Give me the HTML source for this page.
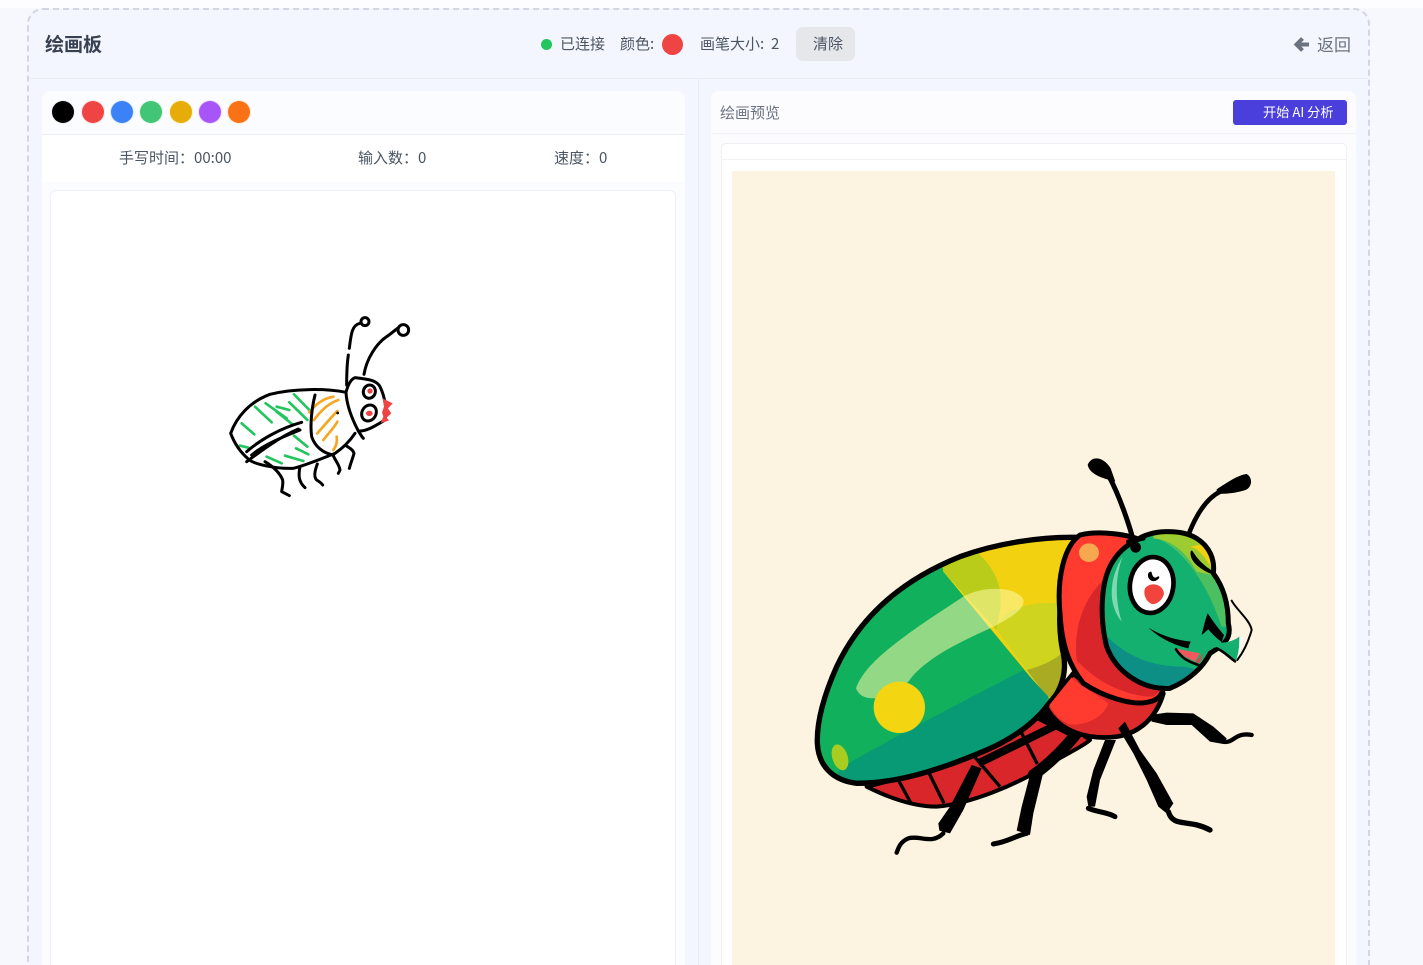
<!DOCTYPE html>
<html lang="zh">
<head>
<meta charset="utf-8">
<title>绘画板</title>
<style>
*{box-sizing:border-box}
html,body{margin:0;padding:0;width:1423px;height:965px;overflow:hidden}
#root{position:relative;width:1423px;height:965px;overflow:hidden;background:#f7f8fe;font-family:"Noto Sans CJK SC","Liberation Sans",sans-serif;color:#4b5563}
.a{position:absolute}
.t{position:absolute;white-space:nowrap;line-height:20px;font-size:15px;color:#4b5563}
.sw{position:absolute;width:22px;height:22px;border-radius:50%;top:101px}
svg{position:absolute;left:0;top:0}
</style>
</head>
<body>
<div id="root">
<div class="a" style="left:0;top:0;width:1423px;height:8px;background:#fdfdff"></div>
<div class="a" style="left:27px;top:8px;width:1343px;height:1000px;border:2px dashed #d3d6e2;border-radius:16px;background:#f3f6fe"></div>
<div class="a" style="left:29px;top:78px;width:1339px;height:1px;background:#e9ecf5"></div>
<div class="a" style="left:698px;top:79px;width:1px;height:886px;background:#e9ecf5"></div>

<div class="t" style="left:45px;top:34px;font-size:19px;font-weight:700;color:#374151">绘画板</div>
<div class="a" style="left:541px;top:39px;width:11px;height:11px;border-radius:50%;background:#22c55e"></div>
<div class="t" style="left:560px;top:34px">已连接</div>
<div class="t" style="left:620px;top:34px">颜色:</div>
<div class="a" style="left:662px;top:34px;width:21px;height:21px;border-radius:50%;background:#ef4444"></div>
<div class="t" style="left:700px;top:34px">画笔大小:</div>
<div class="t" style="left:771px;top:34px">2</div>
<div class="a" style="left:796px;top:27px;width:59px;height:34px;border-radius:7px;background:#e5e7eb"></div>
<div class="t" style="left:813px;top:34px;font-size:15px">清除</div>
<svg width="1423" height="965" style="pointer-events:none"><path d="M1309 44.500H1298M1302.500 38.500L1296.500 44.500L1302.500 50.500" fill="none" stroke="#6b7280" stroke-width="4"/></svg>
<div class="t" style="left:1317px;top:34px;font-size:17px;color:#6b7280">返回</div>

<!-- left panel -->
<div class="a" style="left:42px;top:91px;width:643px;height:900px;border-radius:8px;background:#fbfcff"></div>
<div class="a" style="left:42px;top:134px;width:643px;height:1px;background:#eceef2"></div>
<div class="a" style="left:42px;top:135px;width:643px;height:47px;background:#fff"></div>
<div class="sw" style="left:52px;background:#000;box-shadow:0 0 0 1px #f1f1f4"></div>
<div class="sw" style="left:81.500px;background:#ef4444;box-shadow:0 0 0 1px #fde3e3"></div>
<div class="sw" style="left:111px;background:#3b82f6;box-shadow:0 0 0 1px #dfeafd"></div>
<div class="sw" style="left:140px;background:#42c574;box-shadow:0 0 0 1px #e0f6e8"></div>
<div class="sw" style="left:169.500px;background:#e6ac0a;box-shadow:0 0 0 1px #faefce"></div>
<div class="sw" style="left:198.500px;background:#a855f7;box-shadow:0 0 0 1px #efe2fd"></div>
<div class="sw" style="left:228px;background:#f97316;box-shadow:0 0 0 1px #fde8d8"></div>
<div class="t" style="left:119px;top:148px">手写时间：00:00</div>
<div class="t" style="left:358px;top:148px">输入数：0</div>
<div class="t" style="left:554px;top:148px">速度：0</div>
<div class="a" style="left:50px;top:190px;width:626px;height:800px;background:#fff;border:1px solid #eef0f4;border-radius:6px"></div>

<!-- right panel -->
<div class="a" style="left:711px;top:91px;width:645px;height:900px;border-radius:8px;background:#fcfcff"></div>
<div class="a" style="left:711px;top:133px;width:645px;height:1px;background:#f1f2f7"></div>
<div class="t" style="left:720px;top:103px;color:#6b7280">绘画预览</div>
<div class="a" style="left:1233px;top:100px;width:114px;height:25px;border-radius:3px;background:#4a3fdc"></div>
<div class="t" style="left:1263px;top:102px;font-size:13.200px;color:#fff">开始 AI 分析</div>
<div class="a" style="left:721px;top:143px;width:626px;height:860px;background:#fff;border:1px solid #eef0f4;border-radius:5px"></div>
<div class="a" style="left:722px;top:159px;width:624px;height:1px;background:#f1f2f5"></div>
<div class="a" style="left:732px;top:171px;width:603px;height:794px;background:#fcf3e1"></div>

<svg width="1423" height="965" viewBox="0 0 1423 965" style="filter:blur(.35px)">
<defs>
<clipPath id="shell"><path d="M830 292C720 290 590 310 480 350C330 410 190 510 110 680C70 770 50 850 52 910C55 970 90 1020 170 1030C290 1030 420 990 560 930C640 895 700 850 740 800C790 750 800 690 790 640C770 560 775 400 830 292Z"/></clipPath>
<clipPath id="head"><path d="M290 300C330 270 420 265 470 295C510 320 525 360 520 400C550 440 565 490 565 550C575 590 560 610 510 640C490 680 450 720 390 745C310 750 230 700 200 620C180 540 180 430 215 370C235 335 260 315 290 300Z"/></clipPath>
</defs>

<!-- hand sketch -->
<g transform="translate(220 305) scale(.33333)" fill="none" stroke-linecap="round" stroke-linejoin="round">
<g stroke="#22c55e" stroke-width="8">
<path d="M65 355L103 388M105 305L155 352M137 295L200 340M170 305L208 315M170 320L220 360M208 292L262 345M222 268L268 315M222 392L262 425M228 430L265 448M195 452L250 468M140 455L185 475M60 422L85 428"/>
</g>
<g stroke="#f5a623" stroke-width="8">
<path d="M268 322C285 300 310 280 340 275M282 345C300 320 325 295 355 285M292 385C310 365 335 335 352 318M310 405C325 385 345 365 352 350M340 435C350 420 352 410 350 395"/>
</g>
<g stroke="#000" stroke-width="9">
<path d="M378 262C320 250 220 250 150 268C90 290 50 335 32 385C45 420 65 445 85 462C100 478 170 492 220 490C260 480 320 455 345 445C375 425 395 400 405 385"/>
<path d="M285 270C275 310 270 360 275 395C285 425 310 445 340 450"/>
<path d="M378 262C385 235 395 222 405 218C440 222 470 225 480 245C495 275 502 320 495 345C470 360 440 380 415 378C395 340 380 300 378 262Z"/>
<path d="M415 378C420 385 425 395 430 400"/>
<ellipse cx="448" cy="260" rx="18" ry="20" transform="rotate(15 448 260)"/>
<ellipse cx="447" cy="324" rx="21" ry="25" transform="rotate(30 447 324)"/>
<path d="M380 240C380 200 382 170 385 150M388 130C393 90 395 60 420 55"/>
<circle cx="435" cy="50" r="12"/>
<path d="M432 208C440 160 470 115 500 95C515 85 525 75 533 70"/>
<circle cx="550" cy="75" r="16"/>
<path d="M80 440C120 405 180 370 245 352M95 450C130 420 190 395 240 375M80 470C120 440 180 395 235 372"/>
<path d="M135 470C160 485 180 505 188 525C190 540 185 555 185 560C195 565 205 570 208 572"/>
<path d="M240 485C235 510 235 530 255 548M292 477C285 495 280 515 290 525C298 530 305 535 308 540M340 452C345 465 358 480 360 495C358 500 357 502 355 505M378 422C390 430 400 435 402 445C398 460 392 475 388 490"/>
</g>
<circle cx="353" cy="324" r="4" fill="#000"/>
<g fill="#ef4444"><circle cx="450" cy="258" r="8"/><ellipse cx="448" cy="325" rx="10" ry="8"/>
<path d="M488 280L518 295L504 310L514 325L500 338L507 347L482 354L490 335L486 322L492 305Z"/></g>
</g>

<!-- beetle back -->
<g transform="translate(800 440) scale(.33333)" stroke-linecap="round" stroke-linejoin="round">
<path d="M200 1040C280 1080 350 1100 410 1100C520 1090 650 1030 720 990C780 950 850 920 870 900L740 810C640 890 420 990 200 1040Z" fill="#d8262a" stroke="#000" stroke-width="12"/>
<g fill="none" stroke="#000" stroke-linecap="butt">
<path d="M295 1020L332 1088M385 995L432 1090M515 940L600 1040M660 870L712 972" stroke-width="10"/>
<path d="M535 970L780 850" stroke-width="24"/>
<path d="M720 825L830 880" stroke-width="36"/>
</g>
<path d="M515 975L545 985L490 1110L450 1180L418 1172L415 1150L450 1100Z" fill="#000"/>
<path d="M430 1180C395 1215 360 1185 325 1195C300 1205 295 1225 290 1238" fill="none" stroke="#000" stroke-width="13"/>
<path d="M830 880C790 930 750 970 700 1005" fill="none" stroke="#000" stroke-width="34"/>
<path d="M690 1005L728 1005L700 1120L690 1185L650 1172L665 1100Z" fill="#000"/>
<path d="M680 1180C640 1190 625 1205 580 1212" fill="none" stroke="#000" stroke-width="15"/>
<g clip-path="url(#shell)">
<rect x="0" y="250" width="900" height="850" fill="#10b05c"/>
<path d="M430 395L420 330L850 270V820L740 770Z" fill="#f2d210"/>
<path d="M430 395L420 330L535 340C590 390 610 450 600 510L590 570Z" fill="#b9cc1a"/>
<path d="M590 570C600 520 660 480 790 490L810 760L740 770Z" fill="#cfd41e"/>
<path d="M680 690C720 680 770 660 800 625L810 780L740 770Z" fill="#a9ac22"/>
<path d="M120 985C300 880 500 780 670 690L745 770L700 870L400 1040L100 1040Z" fill="#089a74"/>
<path d="M168 745C195 670 290 600 490 470C540 440 640 435 668 475C680 500 650 525 570 565C470 610 370 660 325 725C280 770 190 800 168 745Z" fill="#fffaa8" opacity=".55"/>
<circle cx="298" cy="802" r="77" fill="#f4d512"/>
<ellipse cx="120" cy="952" rx="23" ry="40" transform="rotate(-18 120 952)" fill="#a8cc20"/>
</g>
<path d="M830 292C720 290 590 310 480 350C330 410 190 510 110 680C70 770 50 850 52 910C55 970 90 1020 170 1030C290 1030 420 990 560 930C640 895 700 850 740 800C790 750 800 690 790 640C770 560 775 400 830 292Z" fill="none" stroke="#000" stroke-width="16"/>
</g>

<!-- beetle front -->
<g transform="translate(1040 440) scale(.33333)" stroke-linecap="round" stroke-linejoin="round">
<path d="M330 825L380 818L460 820L520 860L560 895L550 912L510 905L455 855L380 855L335 845Z" fill="#000"/>
<path d="M550 905C580 912 585 875 635 885" fill="none" stroke="#000" stroke-width="13"/>
<path d="M195 900L228 900L180 1020L165 1100L145 1100L140 1070L160 990Z" fill="#000"/>
<path d="M145 1105C175 1118 200 1115 225 1130" fill="none" stroke="#000" stroke-width="15"/>
<path d="M18 800L100 700C150 750 280 790 370 760C350 830 300 880 230 890C150 900 60 880 18 800Z" fill="#dd2a2a" stroke="#000" stroke-width="14"/>
<path d="M28 795L95 712C120 740 170 760 205 790C190 835 130 860 85 852C60 840 40 820 28 795Z" fill="#ff3b30"/>
<path d="M235 865L255 845L300 930L350 1000L400 1090L380 1120L355 1100L320 1020L280 940Z" fill="#000"/>
<path d="M385 1115C400 1165 445 1135 510 1170" fill="none" stroke="#000" stroke-width="16"/>
<path d="M120 285C70 320 50 420 60 520C65 620 90 680 130 730C190 770 280 800 330 785C355 780 370 760 370 740L300 300C270 285 180 270 120 285Z" fill="#ff3b30" stroke="#000" stroke-width="15"/>
<path d="M190 420C130 480 100 560 110 660C170 730 270 772 340 770L375 740L250 400Z" fill="#d8262a"/>
<ellipse cx="147" cy="338" rx="30" ry="28" fill="#f6a850"/>
<path d="M285 320C270 260 240 170 205 105" fill="none" stroke="#000" stroke-width="15"/>
<path d="M143 75C155 45 190 50 212 85L226 125C190 115 150 105 143 75Z" fill="#000"/>
<path d="M445 285C470 220 500 175 540 155" fill="none" stroke="#000" stroke-width="14"/>
<path d="M530 148C565 125 595 105 620 102C642 115 635 148 610 152C585 160 555 162 530 162Z" fill="#000"/>
<g clip-path="url(#head)">
<rect x="150" y="250" width="450" height="520" fill="#14b070"/>
<path d="M175 560C240 640 320 680 430 680L480 690L390 770L170 700Z" fill="#0e8f85"/>
<path d="M350 295C420 320 500 420 545 560L580 560L580 250H350Z" fill="#4cc060"/>
<path d="M340 295C400 300 440 340 470 395L540 410L520 260H340Z" fill="#9ccc30"/>
<path d="M450 320C480 325 510 370 525 410L560 300Z" fill="#f0d010"/>
<path d="M248 350C210 410 200 490 245 545C225 480 225 410 248 350Z" fill="#80d8b0"/>
</g>
<path d="M290 300C330 270 420 265 470 295C510 320 525 360 520 400C550 440 565 490 565 550C575 590 560 610 510 640C490 680 450 720 390 745C310 750 230 700 200 620C180 540 180 430 215 370C235 335 260 315 290 300Z" fill="none" stroke="#000" stroke-width="15"/>
<path d="M455 335C450 365 490 390 522 402L515 395C490 380 470 360 455 335Z" fill="#000" stroke="#000" stroke-width="6"/>
<circle cx="287" cy="322" r="16" fill="#000"/>
<path d="M265 305L310 295" stroke="#000" stroke-width="14"/>
<ellipse cx="335" cy="435" rx="65" ry="84" transform="rotate(8 335 435)" fill="#fff" stroke="#000" stroke-width="14"/>
<path d="M315 445C330 425 370 430 372 462C365 485 345 495 335 492C320 485 308 465 315 445Z" fill="#f0443c"/>
<path d="M328 400C322 420 345 428 355 412C345 420 335 415 332 398Z" fill="#000" stroke="#000" stroke-width="6"/>
<path d="M405 625L435 650L465 665L480 640Z" fill="#f2585c"/>
<path d="M465 668L490 640L480 668Z" fill="#e04048"/>
<path d="M325 563C370 590 410 600 452 605L445 625C400 615 360 595 325 563Z" fill="#000"/>
<path d="M408 628C425 655 445 665 475 675" fill="none" stroke="#000" stroke-width="8"/>
<path d="M575 482C590 510 630 540 635 570C628 595 615 630 592 660" fill="none" stroke="#000" stroke-width="6"/>
<path d="M600 595L612 590L595 640Z" fill="#fff"/>
<path d="M445 615C475 605 495 585 505 570C520 590 530 600 545 608C565 608 585 600 598 590C598 625 595 645 587 662C565 650 550 630 525 622C490 628 465 628 445 615Z" fill="#14b070"/>
<path d="M485 585C490 565 495 540 503 520C520 545 535 565 552 585L545 606C530 595 520 585 505 568Z" fill="#000"/>
<path d="M530 625C550 632 565 650 585 664" fill="none" stroke="#000" stroke-width="8"/>
</g>
</svg>
</div>
</body>
</html>
